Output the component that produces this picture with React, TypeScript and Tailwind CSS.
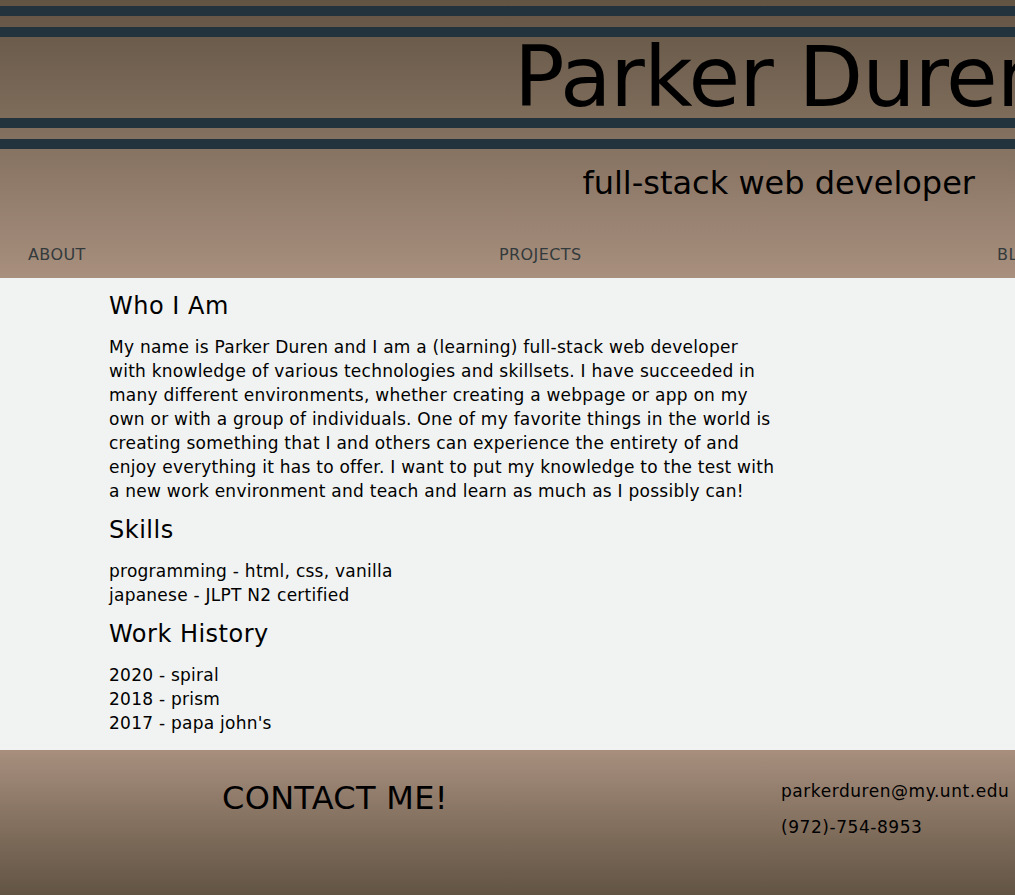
const font = { fontFamily: '"DejaVu Sans", "Open Sans", sans-serif' };

const skills = ['programming - html, css, vanilla', 'japanese - JLPT N2 certified'];
const jobs = ['2020 - spiral', '2018 - prism', "2017 - papa john's"];

const App = () => {
  return (
    <div className="w-[1015px] min-h-[895px] overflow-hidden text-black" style={font}>
      <header className="bg-gradient-to-b from-[#625443] to-[#a88f7e] pt-[6px] pb-[3px]">
        <div className="border-y-[31px] border-double border-[#22333d] h-[143px] overflow-hidden whitespace-nowrap">
          <h1 className="pl-[514px] text-[84px] leading-[81px] font-normal tracking-[-1px]">Parker Duren</h1>
        </div>
        <p className="mt-[14px] pr-[40px] text-right text-[32px] leading-[40px]">full-stack web developer</p>
        <nav className="mt-[32px] flex whitespace-nowrap pl-[28px] text-[16px] leading-[40px] tracking-[0.4px] text-[#333a3c]">
          <a className="w-[471px] shrink-0">ABOUT</a>
          <a className="w-[498px] shrink-0">PROJECTS</a>
          <a className="shrink-0">BLOG</a>
        </nav>
      </header>

      <main className="bg-[#f1f3f2] pb-[15.5px] pt-[1px]">
        <div className="ml-[109px] w-[667px] text-[17px] leading-[24px] tracking-[0.25px]">
          <h2 className="mt-[13px] mb-[13.5px] text-[24px] leading-[29px] tracking-[0.5px]">Who I Am</h2>
          <p>
            My name is Parker Duren and I am a (learning) full-stack web developer with knowledge of various
            technologies and skillsets. I have succeeded in many different environments, whether creating a
            webpage or app on my own or with a group of individuals. One of my favorite things in the world is
            creating something that I and others can experience the entirety of and enjoy everything it has to
            offer. I want to put my knowledge to the test with a new work environment and teach and learn as
            much as I possibly can!
          </p>
          <h2 className="my-[13.5px] text-[24px] leading-[29px] tracking-[0.5px]">Skills</h2>
          <ul>
            {skills.map((s) => (
              <li key={s}>{s}</li>
            ))}
          </ul>
          <h2 className="my-[13.5px] text-[24px] leading-[29px] tracking-[0.5px]">Work History</h2>
          <ul>
            {jobs.map((j) => (
              <li key={j}>{j}</li>
            ))}
          </ul>
        </div>
      </main>

      <footer className="flex h-[145px] bg-gradient-to-b from-[#a88f7e] to-[#625443]">
        <h2 className="w-[781px] shrink-0 pl-[222px] pt-[28px] text-[32px] leading-[40px] tracking-[0.3px]">CONTACT ME!</h2>
        <div className="pt-[29px] text-[17px] tracking-[0.55px]">
          <p className="leading-[24px]">parkerduren@my.unt.edu</p>
          <p className="mt-[12px] leading-[24px]">(972)-754-8953</p>
        </div>
      </footer>
    </div>
  );
};

export default App;
